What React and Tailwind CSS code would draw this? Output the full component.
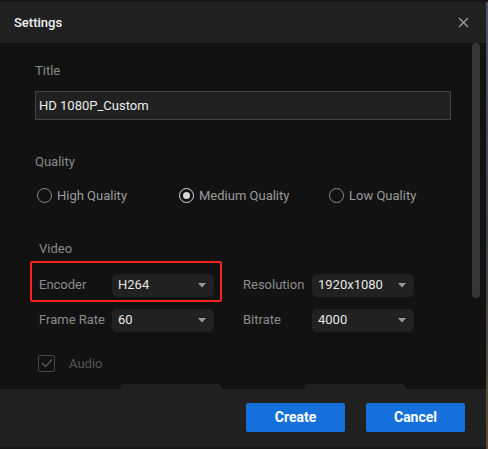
import React from "react";

function Select({ value }) {
  return (
    <div className="w-[102px] h-[23px] shrink-0 rounded-[5px] bg-[#212121] flex items-center justify-between pl-[6px] pr-[8px]">
      <span className="text-[13px] text-[#e6e6e6]">{value}</span>
      <svg width="8" height="5" viewBox="0 0 8 5">
        <path d="M0 0 L8 0 L4 4.5 Z" fill="#9a9a9a" />
      </svg>
    </div>
  );
}

function Radio({ label, checked }) {
  return (
    <div className="flex items-center gap-[5px]">
      <div
        className={
          checked
            ? "w-[15px] h-[15px] rounded-full border-[1.5px] border-[#d8d8d8] flex items-center justify-center"
            : "w-[15px] h-[15px] rounded-full border-[1.5px] border-[#8a8a8a]"
        }
      >
        {checked && <div className="w-[7px] h-[7px] rounded-full bg-[#d8d8d8]" />}
      </div>
      <span className="text-[13px] text-[#9a9a9a]">{label}</span>
    </div>
  );
}

function Field({ label, value, labelW }) {
  return (
    <div className="flex items-center">
      <span className="text-[13px] text-[#8c8c8c]" style={{ width: labelW }}>
        {label}
      </span>
      <Select value={value} />
    </div>
  );
}

export default function App() {
  return (
    <div
      className="w-[488px] h-[449px] bg-[#161616] pt-[2px] overflow-hidden flex"
      style={{ fontFamily: "Roboto, 'Noto Sans', sans-serif" }}
    >
      <div className="w-[486px] h-[445px] flex flex-col">
        {/* header */}
        <div className="h-[41px] shrink-0 bg-[#202020] flex items-center justify-between pl-[14px] pr-[17px]">
          <span className="text-[13px] font-medium text-[#f2f2f2]">Settings</span>
          <svg width="11" height="11" viewBox="0 0 11 11">
            <path d="M1 1 L10 10 M10 1 L1 10" stroke="#a0a0a0" strokeWidth="1.3" />
          </svg>
        </div>

        {/* body */}
        <div className="h-[346px] shrink-0 bg-[#121212] flex overflow-hidden">
          <div className="flex-1 pl-[35px] pr-[21px] flex flex-col">
            <div className="shrink-0 mt-[20px] h-[16px] leading-[16px] text-[13px] text-[#8a8a8a]">Title</div>
            <div className="shrink-0 mt-[12px] h-[29px] bg-[#202020] border border-[#444] flex items-center pl-[3px] text-[13px] text-[#ececec]">
              HD 1080P_Custom
            </div>
            <div className="shrink-0 mt-[34px] h-[16px] leading-[16px] text-[13px] text-[#8a8a8a]">Quality</div>
            <div className="shrink-0 mt-[16px] flex items-center pl-[2px]">
              <div className="w-[142px]"><Radio label="High Quality" /></div>
              <div className="w-[150px]"><Radio label="Medium Quality" checked /></div>
              <Radio label="Low Quality" />
            </div>
            <div className="shrink-0 mt-[35px] h-[16px] leading-[16px] text-[13px] text-[#8a8a8a] pl-[4px]">Video</div>

            <div className="shrink-0 relative mt-[15px] pl-[4px] flex flex-col gap-[12px]">
              <div className="flex gap-[29px] pt-[2px]">
                <Field label="Encoder" value="H264" labelW={73} />
                <Field label="Resolution" value="1920x1080" labelW={69} />
              </div>
              <div className="flex gap-[29px]">
                <Field label="Frame Rate" value="60" labelW={73} />
                <Field label="Bitrate" value="4000" labelW={69} />
              </div>
              <div className="absolute left-[-5px] top-[-11px] w-[192px] h-[41px] border-2 border-[#f5231b] rounded-[2px]" />
            </div>

            <div className="shrink-0 mt-[22px] flex items-center gap-[14px] pl-[3px]">
              <div className="w-[17px] h-[17px] border border-[#454545] rounded-[2px] flex items-center justify-center">
                <svg width="12" height="10" viewBox="0 0 12 10">
                  <path d="M1 5 L4.5 8.5 L11 1.5" stroke="#555" strokeWidth="1.5" fill="none" />
                </svg>
              </div>
              <span className="text-[13px] text-[#555]">Audio</span>
            </div>
            <div className="shrink-0 mt-[11px] flex pl-[85px] gap-[82px]">
              <div className="w-[102px] h-[23px] rounded-[5px] bg-[#212121]" />
              <div className="w-[102px] h-[23px] rounded-[5px] bg-[#212121]" />
            </div>
          </div>
          <div className="w-[8px] mr-[6px] h-[255px] shrink-0 rounded-full bg-[#363636]" />
        </div>

        {/* footer */}
        <div className="flex-1 bg-[#202020] flex justify-end items-start pt-[14px] pr-[21px] gap-[21px]">
          <button className="w-[99px] h-[29px] rounded-[2px] bg-[#1670dc] text-white text-[14px] font-bold">
            Create
          </button>
          <button className="w-[99px] h-[29px] rounded-[2px] bg-[#1670dc] text-white text-[14px] font-bold">
            Cancel
          </button>
        </div>
      </div>
      <div className="w-[2px] h-full bg-gradient-to-b from-[#4a5566] via-[#3a3f48] to-[#5a4a30]" />
    </div>
  );
}
